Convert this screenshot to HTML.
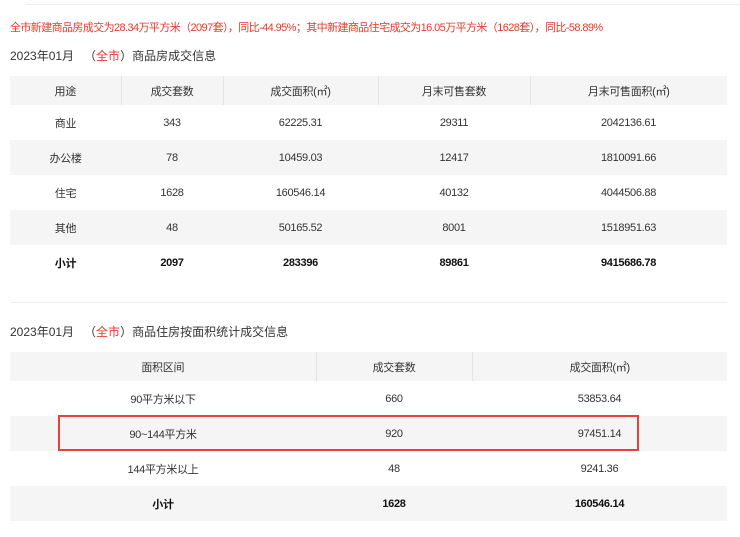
<!DOCTYPE html>
<html><head><meta charset="utf-8"><style>
body{margin:0;width:740px;height:537px;background:#fff;font-family:"Liberation Sans","Noto Sans CJK SC",sans-serif;color:#333;position:relative;overflow:hidden}
.abs{position:absolute}
table{position:absolute;left:10px;width:717px;border-collapse:collapse;font-size:11px;text-align:center;letter-spacing:-0.3px}
th{background:#f5f5f5;font-weight:normal;height:29px;border-left:1px solid #e4e4e4;padding:0}
th:first-child{border-left:none}
td{height:34px;padding:1px 0 0 0}
tr.g td{background:#f5f5f5}
tr.b td{font-weight:bold;color:#111}
.t{font-size:12px;color:#333}
.r{color:#e83a2a}
</style></head><body>
<div class="abs" style="left:26px;top:4px;width:714px;height:1px;background:#eee"></div>
<div class="abs r" style="left:10px;top:19px;font-size:11px;white-space:nowrap;letter-spacing:-0.6px">全市新建商品房成交为28.34万平方米（2097套），同比-44.95%；其中新建商品住宅成交为16.05万平方米（1628套），同比-58.89%</div>
<div class="abs t" style="left:10px;top:47px;white-space:nowrap">2023年01月 &nbsp;&nbsp;（<span class="r">全市</span>）商品房成交信息</div>
<table style="top:76px">
<colgroup><col style="width:111px"><col style="width:102px"><col style="width:155px"><col style="width:152px"><col></colgroup>
<tr><th>用途</th><th>成交套数</th><th>成交面积(㎡)</th><th>月末可售套数</th><th>月末可售面积(㎡)</th></tr>
<tr><td>商业</td><td>343</td><td>62225.31</td><td>29311</td><td>2042136.61</td></tr>
<tr class="g"><td>办公楼</td><td>78</td><td>10459.03</td><td>12417</td><td>1810091.66</td></tr>
<tr><td>住宅</td><td>1628</td><td>160546.14</td><td>40132</td><td>4044506.88</td></tr>
<tr class="g"><td>其他</td><td>48</td><td>50165.52</td><td>8001</td><td>1518951.63</td></tr>
<tr class="b"><td>小计</td><td>2097</td><td>283396</td><td>89861</td><td>9415686.78</td></tr>
</table>
<div class="abs" style="left:10px;top:302px;width:717px;height:1px;background:#eee"></div>
<div class="abs t" style="left:10px;top:323px;white-space:nowrap">2023年01月 &nbsp;&nbsp;（<span class="r">全市</span>）商品住房按面积统计成交信息</div>
<table style="top:352px">
<colgroup><col style="width:306px"><col style="width:156px"><col></colgroup>
<tr><th style="height:28px">面积区间</th><th>成交套数</th><th>成交面积(㎡)</th></tr>
<tr><td>90平方米以下</td><td>660</td><td>53853.64</td></tr>
<tr class="g"><td>90~144平方米</td><td>920</td><td>97451.14</td></tr>
<tr><td>144平方米以上</td><td>48</td><td>9241.36</td></tr>
<tr class="g b"><td>小计</td><td>1628</td><td>160546.14</td></tr>
</table>
<div class="abs" style="left:58px;top:415px;width:577px;height:32px;border:2px solid #e8413a"></div>
</body></html>
